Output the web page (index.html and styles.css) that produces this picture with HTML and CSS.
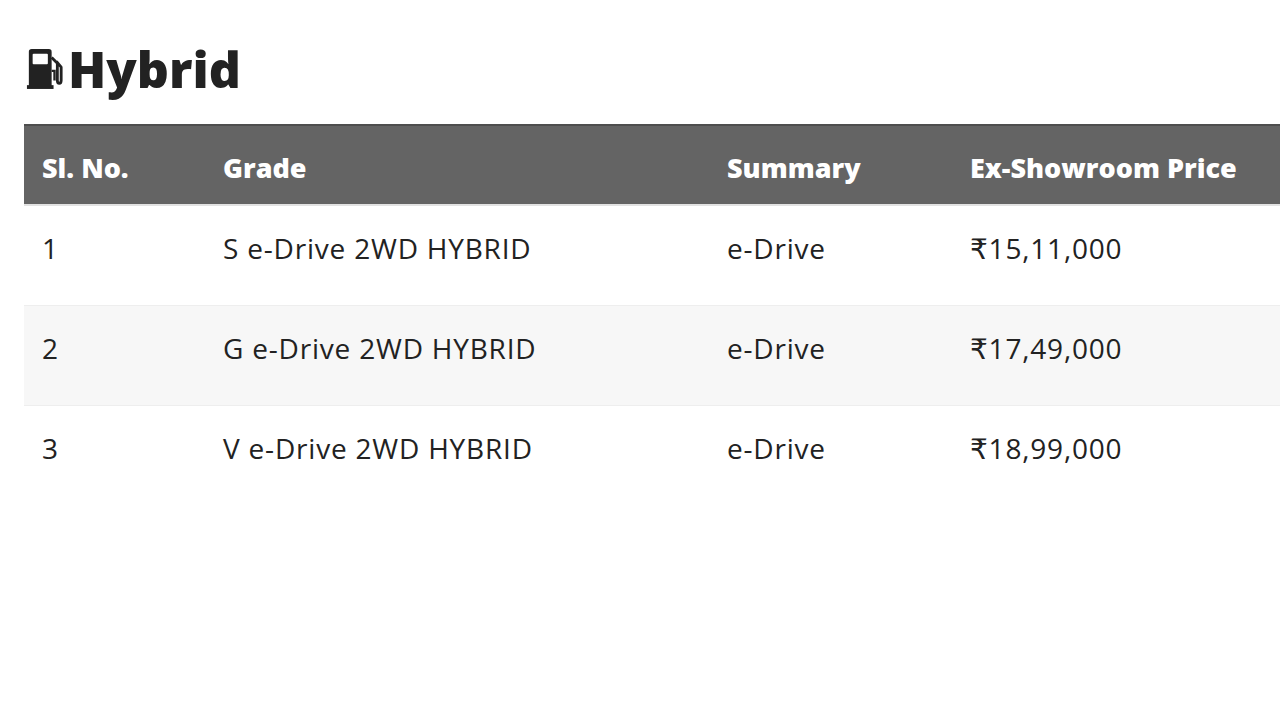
FILE: index.html
```html
<!DOCTYPE html>
<html lang="en">
<head>
<meta charset="utf-8">
<title>Hybrid</title>
<link rel="stylesheet" href="styles.css">
</head>
<body>
<div class="page">
  <h1 class="title">
    <svg class="pump" viewBox="0 0 40 44" width="38" height="42" aria-hidden="true">
      <path d="M3 4 Q3 1 6 1 H24 Q27 1 27 4 V41 H3 Z" fill="#222"/>
      <rect x="7" y="6" width="16" height="11" rx="1" fill="#fff"/>
      <path d="M27 10 L33 16 V34 Q33 37 35 37 Q37 37 37 34 V20 L32 14" fill="none" stroke="#222" stroke-width="3" stroke-linejoin="round"/>
      <path d="M27 24 H30 V34" fill="none" stroke="#222" stroke-width="2.5"/>
      <rect x="1" y="39" width="28" height="4" fill="#222"/>
    </svg>
    <span>Hybrid</span>
  </h1>
  <table class="grid">
    <thead>
      <tr>
        <th class="c1">Sl. No.</th>
        <th class="c2">Grade</th>
        <th class="c3">Summary</th>
        <th class="c4">Ex-Showroom Price</th>
      </tr>
    </thead>
    <tbody>
      <tr><td>1</td><td>S e-Drive 2WD HYBRID</td><td>e-Drive</td><td>₹15,11,000</td></tr>
      <tr class="alt"><td>2</td><td>G e-Drive 2WD HYBRID</td><td>e-Drive</td><td>₹17,49,000</td></tr>
      <tr><td>3</td><td>V e-Drive 2WD HYBRID</td><td>e-Drive</td><td>₹18,99,000</td></tr>
    </tbody>
  </table>
</div>
</body>
</html>
```
FILE: styles.css
```css
html, body {
  margin: 0;
  padding: 0;
  background: #fff;
}
.page {
  padding: 40px 0 0 24px;
  font-family: "Open Sans", "DejaVu Sans", sans-serif;
  color: #222;
}
.title {
  display: flex;
  align-items: center;
  gap: 4px;
  margin: 0 0 26px 0;
  font-size: 50px;
  font-weight: 800;
  line-height: 58px;
  color: #222;
}
.pump {
  display: block;
  margin-left: 2px;
}
.grid {
  width: 1290px;
  border-collapse: collapse;
  table-layout: fixed;
}
.grid thead tr {
  border-top: 2px solid #4e4e4e;
  border-bottom: 2px solid #e2e2e2;
}
.grid th {
  background: #646464;
  color: #fff;
  text-align: left;
  font-weight: 800;
  font-size: 27px;
  height: 74px;
  padding: 4px 0 0 18px;
}
.grid .c1 { width: 163px; }
.grid .c2 { width: 486px; }
.grid .c3 { width: 225px; }
.grid td {
  font-size: 28px;
  letter-spacing: 0.8px;
  height: 84px;
  padding: 0 0 15px 18px;
  border-bottom: 1px solid #eee;
  color: #222;
}
.grid tr.alt td {
  background: #f7f7f7;
}
.grid tbody tr:last-child td {
  border-bottom: none;
}
```
